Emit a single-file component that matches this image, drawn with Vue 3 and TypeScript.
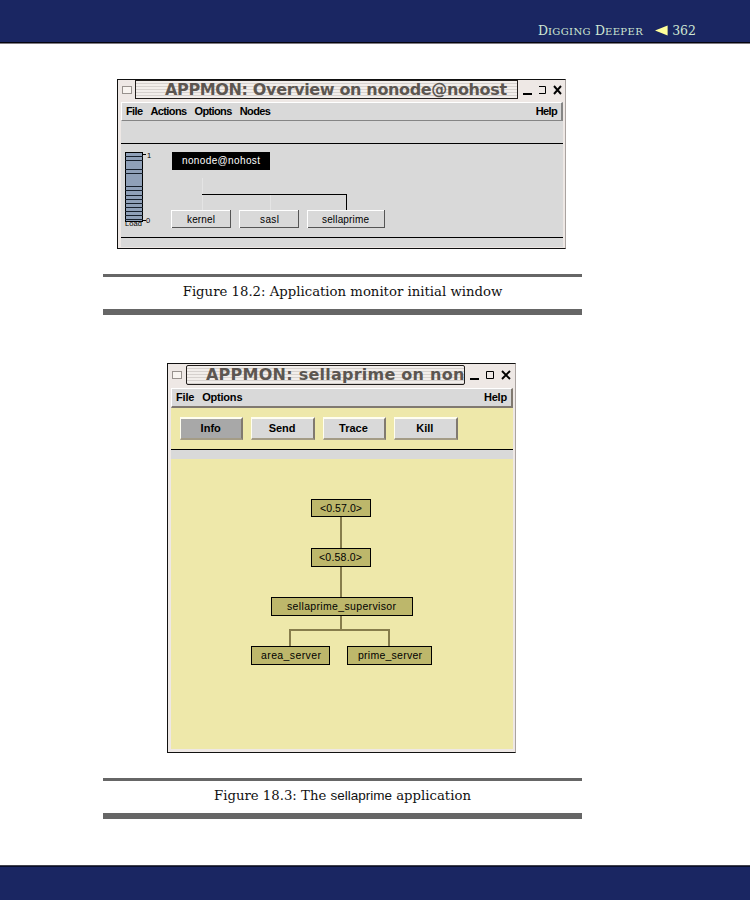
<script setup lang="ts">
interface Box { label: string; x: number; y: number; w: number; h: number; tx: number; tw: number }

const overviewMenu: string[] = ['File', 'Actions', 'Options', 'Nodes']
const detailMenu: string[] = ['File', 'Options']
const tools: string[] = ['Info', 'Send', 'Trace', 'Kill']
const loadMarks: number[] = [4, 8, 17, 21, 34, 38, 43, 47, 51, 55, 59, 63, 67]

const apps: Box[] = [
  { label: 'kernel', x: 50, y: 66, w: 60, h: 18, tx: 66, tw: 28 },
  { label: 'sasl', x: 118, y: 66, w: 60, h: 18, tx: 139, tw: 19 },
  { label: 'sellaprime', x: 186, y: 66, w: 78, h: 18, tx: 201, tw: 47 },
]

const processes: Box[] = [
  { label: '<0.57.0>', x: 140, y: 40, w: 60, h: 18, tx: 149, tw: 42 },
  { label: '<0.58.0>', x: 140, y: 89, w: 60, h: 19, tx: 148, tw: 43 },
  { label: 'sellaprime_supervisor', x: 100, y: 138, w: 142, h: 19, tx: 116, tw: 109 },
  { label: 'area_server', x: 80, y: 187, w: 79, h: 19, tx: 90, tw: 60 },
  { label: 'prime_server', x: 176, y: 187, w: 85, h: 19, tx: 187, tw: 64 },
]
</script>

<template>
  <div class="page">
    <header class="top">
      <span class="chapter">D<small>IGGING</small> D<small>EEPER</small></span>
      <svg class="arrow" width="13" height="11" viewBox="0 0 13 11"><path d="M0 5.5 12.6 0.4V10.6Z" fill="#ffff9a" /></svg>
      <span class="folio">362</span>
    </header>

    <main>
      <section class="window overview">
        <div class="titlebar">
          <i class="sysmenu"></i>
          <div class="title"><span>APPMON: Overview on nonode@nohost</span></div>
          <svg class="controls" width="42" height="14" viewBox="0 0 42 14">
            <path d="M1 11H10" stroke="#000" stroke-width="2" />
            <path d="M17 3.5H23.5V10.5H17" fill="none" stroke="#000" />
            <path d="M32 3 39 11M39 3 32 11" stroke="#000" stroke-width="1.9" />
          </svg>
        </div>
        <nav class="menu"><span v-for="m in overviewMenu" :key="m">{{ m }}</span><span class="help">Help</span></nav>
        <div class="strip"></div>
        <svg class="canvas" width="442" height="93" viewBox="0 0 442 93" shape-rendering="crispEdges">
          <rect x="4.5" y="8.5" width="17" height="69" fill="#8fa0b8" stroke="#000" />
          <path v-for="m in loadMarks" :key="m" :d="`M4 ${m + 8.5}H22`" stroke="#17202c" />
          <path d="M22 10.5H25M22 76.5H25" stroke="#000" />
          <text class="tiny" x="26" y="14">1</text>
          <text class="tiny" x="25" y="79">0</text>
          <text class="tiny" x="4" y="82" textLength="17">Load</text>
          <rect x="51" y="8" width="98" height="18" fill="#000" />
          <text class="light" x="61" y="20" textLength="78">nonode@nohost</text>
          <path d="M81.5 34V66M149.5 51V66" stroke="#e4e4e4" />
          <path d="M81 50.5H225.5V66" fill="none" stroke="#000" />
          <g v-for="a in apps" :key="a.label">
            <rect :x="a.x" :y="a.y" :width="a.w" :height="a.h" fill="#d9d9d9" />
            <path :d="`M${a.x + .5} ${a.y + a.h}V${a.y + .5}H${a.x + a.w}`" fill="none" stroke="#fff" />
            <path :d="`M${a.x + 1} ${a.y + a.h - .5}H${a.x + a.w - .5}V${a.y}`" fill="none" stroke="#555" />
            <text :x="a.tx" :y="a.y + 13" :textLength="a.tw">{{ a.label }}</text>
          </g>
        </svg>
        <div class="foot"></div>
      </section>

      <p class="caption first"><span>Figure 18.2: Application monitor initial window</span></p>

      <section class="window detail">
        <div class="titlebar">
          <i class="sysmenu"></i>
          <div class="title"><span>APPMON: sellaprime on non</span></div>
          <svg class="controls" width="42" height="14" viewBox="0 0 42 14">
            <path d="M1 11H10" stroke="#000" stroke-width="2" />
            <path d="M17.5 3.5H24.5V10.5H17.5Z" fill="none" stroke="#000" />
            <path d="M33 3 41 11M41 3 33 11" stroke="#000" stroke-width="1.9" />
          </svg>
        </div>
        <nav class="menu"><span v-for="m in detailMenu" :key="m">{{ m }}</span><span class="help">Help</span></nav>
        <div class="tools">
          <button v-for="(t, i) in tools" :key="t" :class="{ active: i === 0 }">{{ t }}</button>
        </div>
        <div class="band"></div>
        <svg class="tree" width="342" height="290" viewBox="0 0 342 290" shape-rendering="crispEdges">
          <path d="M170 58V89M170 107V138M170 156V171M119 187V171H218V187" fill="none" stroke="#877d4c" stroke-width="2" />
          <g v-for="p in processes" :key="p.label">
            <rect :x="p.x + .5" :y="p.y + .5" :width="p.w - 1" :height="p.h - 1" fill="#bdb76b" stroke="#000" />
            <text :x="p.tx" :y="p.y + 12.5" :textLength="p.tw">{{ p.label }}</text>
          </g>
        </svg>
      </section>

      <p class="caption second"><span>Figure 18.3: The <em>sellaprime</em> application</span></p>
    </main>

    <footer class="bottom"></footer>
  </div>
</template>

<style>
body { margin: 0; background: #fff; }
</style>

<style scoped>
.page { width: 750px; height: 900px; display: flex; flex-direction: column; background: #fff; overflow: hidden; }
.top { box-sizing: border-box; height: 44px; flex: none; display: flex; align-items: flex-start; justify-content: flex-end; padding: 23px 54px 0 0; background: #1a2662; border-bottom: 1px solid #807b82; box-shadow: inset 0 -1px #05050f; color: #cfe6d3; font: 12.5px/16px "DejaVu Serif", serif; }
.chapter { letter-spacing: 0; }
.chapter small { font-size: 10px; letter-spacing: 0.4px; }
.arrow { margin: 2px 4px 0 12px; }
main { flex: 1; }
.bottom { box-sizing: border-box; height: 35px; flex: none; background: #1a2662; border-top: 1px solid #41414c; box-shadow: inset 0 1px #080e2b; }

.window { box-sizing: border-box; border: 1px solid #111; border-right-color: #aaa3a0; background: #eee8e5; padding-left: 3px; font-family: "Liberation Sans", sans-serif; }
.overview { width: 449px; height: 170px; margin: 35px 0 0 117px; }
.detail { width: 349px; height: 390px; margin: 48px 0 0 167px; }
.titlebar { display: flex; height: 22px; align-items: flex-start; }
.detail .titlebar { height: 24px; }
.sysmenu { box-sizing: border-box; width: 10px; height: 8px; border: 1px solid #98928e; margin: 6px 3px 0 1px; background: #f8f4f0; }
.detail .sysmenu { margin-top: 7px; margin-right: 4px; }
.title { box-sizing: border-box; width: 383px; height: 19px; border: 1px solid #221e1c; background: repeating-linear-gradient(#f2eeeb 0 2px, #d6d1ce 2px 3px); overflow: hidden; color: #5c5651; font: bold 16px/17px "DejaVu Sans", sans-serif; white-space: nowrap; letter-spacing: -0.36px; }
.title span { display: block; padding-left: 29px; }
.detail .title { width: 279px; height: 20px; border-radius: 2px; margin-top: 1px; line-height: 18px; letter-spacing: 0.24px; }
.detail .title span { padding-left: 19px; }
.controls { margin: 3px 0 0 4px; }
.detail .controls { margin: 4px 0 0 4px; }
.menu { box-sizing: border-box; display: flex; width: 442px; height: 19px; padding: 0 4px 0 4px; gap: 8px; background: #d9d9d9; border-top: 1px solid #fff; border-left: 1px solid #fff; border-right: 2px solid #858585; border-bottom: 1px solid #858585; color: #000; font: bold 11px/17px "Liberation Sans", sans-serif; letter-spacing: -0.62px; }
.detail .menu { width: 342px; height: 20px; border-right-color: #807970; border-bottom: 2px solid #807970; font-size: 11px; letter-spacing: -0.2px; }
.help { margin-left: auto; }
.strip { width: 442px; height: 22px; background: #d9d9d9; border-bottom: 1px solid #000; }
.canvas { display: block; background: #d9d9d9; font: 10px "Liberation Sans", sans-serif; }
.tiny { font-size: 7.5px; }
.light { fill: #fff; }
.foot { width: 442px; height: 9px; background: #d9d9d9; border-top: 1px solid #000; }
.tools { box-sizing: border-box; display: flex; gap: 8px; width: 342px; height: 42px; padding: 9px 0 0 9px; background: #eee8aa; border-bottom: 1px solid #000; }
button { box-sizing: border-box; width: 63.4px; height: 23px; margin: 0; padding: 0 1px 0 0; border: 1px solid #fff; border-width: 2px 2px 2px 1px; border-color: #fffef0 #807970 #a49c86 #fffef0; background: #d9d9d9; color: #000; font: bold 11px/17px "Liberation Sans", sans-serif; }
button.active { background: #a8a8a8; }
.band { width: 342px; height: 9px; background: #d9d9d9; }
.tree { display: block; background: #eee8aa; font: 10.5px "Liberation Sans", sans-serif; }

.caption { box-sizing: border-box; width: 479px; height: 41px; margin: 25px 0 0 103px; border-top: 3px solid #666; border-bottom: 6px solid #666; text-align: center; color: #111; font: 13.25px/29px "DejaVu Serif", serif; white-space: nowrap; }
.caption em { font: 13.5px "Liberation Sans", sans-serif; letter-spacing: 0; }
</style>
